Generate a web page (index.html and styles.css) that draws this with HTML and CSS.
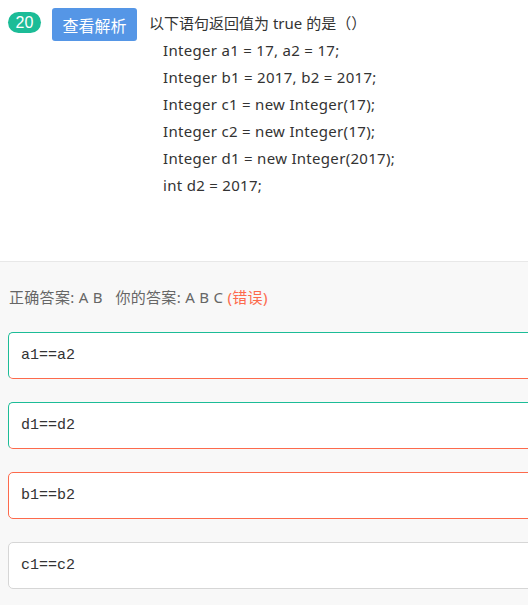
FILE: index.html
```html
<!DOCTYPE html>
<html lang="zh">
<head>
<meta charset="utf-8">
<link rel="stylesheet" href="styles.css">
</head>
<body>
<div class="page">
  <section class="question">
    <div class="head">
      <span class="badge">20</span>
      <button class="btn">查看解析</button>
      <div class="stem">
        <p class="title">以下语句返回值为 true 的是（）</p>
        <p class="code">Integer a1 = 17, a2 = 17;</p>
        <p class="code">Integer b1 = 2017, b2 = 2017;</p>
        <p class="code">Integer c1 = new Integer(17);</p>
        <p class="code">Integer c2 = new Integer(17);</p>
        <p class="code">Integer d1 = new Integer(2017);</p>
        <p class="code">int d2 = 2017;</p>
      </div>
    </div>
  </section>
  <section class="answers">
    <p class="result">正确答案: A B &nbsp; 你的答案: A B C <span class="wrong">(错误)</span></p>
    <div class="option ok">a1==a2</div>
    <div class="option ok">d1==d2</div>
    <div class="option bad">b1==b2</div>
    <div class="option">c1==c2</div>
  </section>
</div>
</body>
</html>
```
FILE: styles.css
```css
html, body {
  margin: 0;
  padding: 0;
  overflow: hidden;
}
body {
  font-family: "Open Sans", "Liberation Sans", "Noto Sans CJK SC", sans-serif;
  color: #333;
  background: #f8f8f8;
}
.page {
  width: 528px;
  height: 605px;
  overflow: hidden;
}
.question {
  background: #fff;
  height: 261px;
  border-bottom: 1px solid #e8e8e8;
  box-sizing: content-box;
}
.head {
  display: flex;
  align-items: flex-start;
  padding: 8px 0 0 8px;
}
.badge {
  display: inline-block;
  width: 33px;
  height: 21px;
  line-height: 21px;
  margin-top: 4px;
  border-radius: 11px;
  background: #1cbc97;
  color: #fff;
  font-size: 16px;
  text-align: center;
  font-family: "Liberation Sans", sans-serif;
}
.btn {
  margin-left: 11px;
  width: 85px;
  height: 33px;
  border: 0;
  border-radius: 3px;
  background: #5596e6;
  color: #fff;
  font-size: 16px;
  font-family: "Noto Sans CJK SC", sans-serif;
  padding: 0;
}
.stem {
  margin-left: 12px;
  font-family: "Noto Sans", "Noto Sans CJK SC", sans-serif;
  font-size: 15px;
  letter-spacing: 0.3px;
}
.stem p {
  margin: 0;
  line-height: 27px;
}
.title {
  margin-top: 2px !important;
  letter-spacing: 0;
}
.code {
  padding-left: 14px;
}
.answers {
  padding: 22px 0 0 8px;
}
.result {
  margin: 0 0 22px 1px;
  font-size: 15px;
  line-height: 26px;
  color: #666;
  font-family: "Noto Sans", "Noto Sans CJK SC", sans-serif;
  letter-spacing: 0.3px;
  white-space: pre;
}
.wrong {
  color: #fd6a4c;
}
.option {
  width: 540px;
  height: 45px;
  margin-bottom: 23px;
  border: 1px solid #d6d6d6;
  border-radius: 5px;
  background: #fff;
  font-family: "Liberation Mono", monospace;
  font-size: 15px;
  line-height: 45px;
  padding-left: 12px;
  color: #333;
}
.option.ok {
  border-color: #1cbc97 #fd6a4c #fd6a4c #1cbc97;
}
.option.bad {
  border-color: #fd6a4c;
}
```
